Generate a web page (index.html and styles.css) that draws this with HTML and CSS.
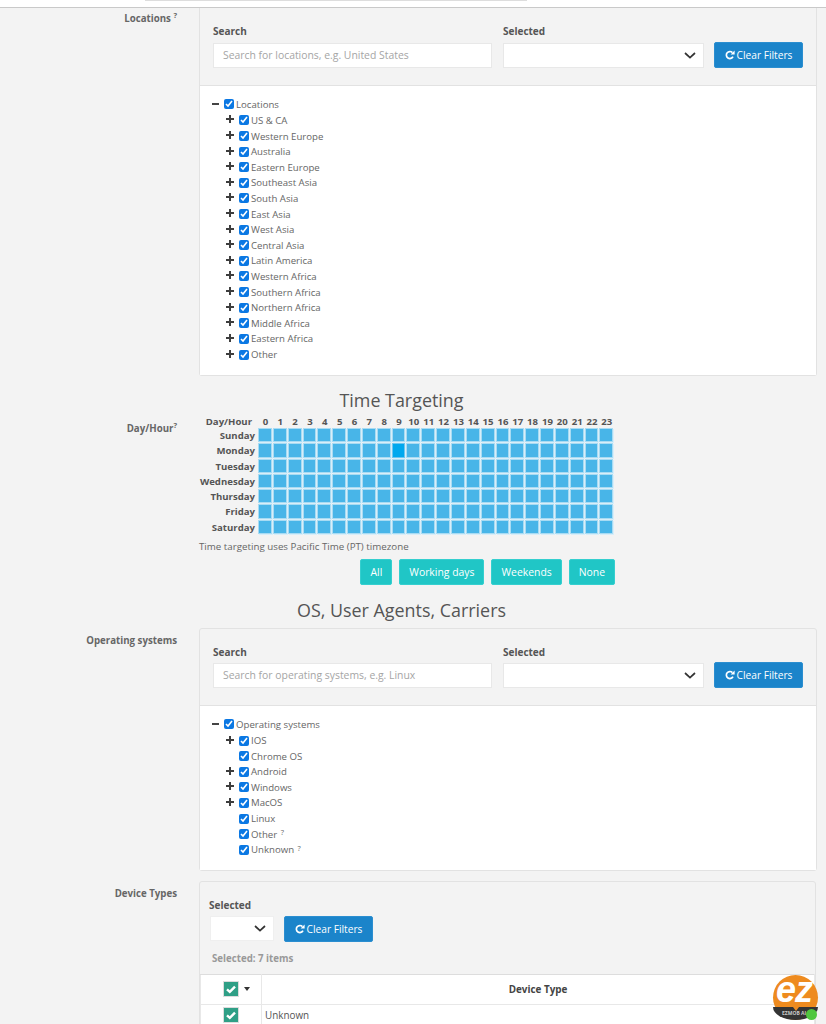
FILE: index.html
```html
<!DOCTYPE html>
<html lang="en">
<head>
    <meta charset="UTF-8">
    <title>Campaign Targeting</title>
    <meta name="viewport" content="width=device-width, initial-scale=1.0">
    <link rel="stylesheet" href="styles.css">
</head>
<body>
    <svg class="icon-defs" width="0" height="0">
        <symbol id="plus" viewBox="0 0 9 9"><path d="M3.4 0h2.2v3.4H9v2.2H5.6V9H3.4V5.6H0V3.4h3.4z"/></symbol>
        <symbol id="chevron" viewBox="0 0 12 7"><path d="M1 1l5 4.6L11 1" fill="none" stroke="#333" stroke-width="1.7"/></symbol>
        <symbol id="refresh" viewBox="0 0 10 10"><path d="M8 6.6A3.5 3.5 0 1 1 7.4 2.6" fill="none" stroke="#fff" stroke-width="1.7"/><path d="M9.6.6v4H5.6z" fill="#fff"/></symbol>
        <symbol id="tick" viewBox="0 0 14 14"><path d="M3 7.4l2.8 2.5L11 4.6" fill="none" stroke="#fff" stroke-width="2.4"/></symbol>
    </svg>

    <div class="top-strip"><div class="top-strip-search"></div></div>

    <div class="form-row row-locations">
        <div class="row-label">Locations <sup>?</sup></div>
        <div class="panel">
            <div class="filter-bar">
                <div class="field field-search">
                    <label>Search</label>
                    <input type="text" class="search-box" placeholder="Search for locations, e.g. United States">
                </div>
                <div class="field field-selected">
                    <label>Selected</label>
                    <div class="select-box"><svg class="chevron"><use href="#chevron"/></svg></div>
                </div>
                <button class="clear-button"><svg class="refresh"><use href="#refresh"/></svg>Clear Filters</button>
            </div>
            <div class="tree">
                <div class="tree-root"><span class="minus"></span><input type="checkbox" checked>Locations</div>
                <div class="tree-item"><svg class="plus"><use href="#plus"/></svg><input type="checkbox" checked>US &amp; CA</div>
                <div class="tree-item"><svg class="plus"><use href="#plus"/></svg><input type="checkbox" checked>Western Europe</div>
                <div class="tree-item"><svg class="plus"><use href="#plus"/></svg><input type="checkbox" checked>Australia</div>
                <div class="tree-item"><svg class="plus"><use href="#plus"/></svg><input type="checkbox" checked>Eastern Europe</div>
                <div class="tree-item"><svg class="plus"><use href="#plus"/></svg><input type="checkbox" checked>Southeast Asia</div>
                <div class="tree-item"><svg class="plus"><use href="#plus"/></svg><input type="checkbox" checked>South Asia</div>
                <div class="tree-item"><svg class="plus"><use href="#plus"/></svg><input type="checkbox" checked>East Asia</div>
                <div class="tree-item"><svg class="plus"><use href="#plus"/></svg><input type="checkbox" checked>West Asia</div>
                <div class="tree-item"><svg class="plus"><use href="#plus"/></svg><input type="checkbox" checked>Central Asia</div>
                <div class="tree-item"><svg class="plus"><use href="#plus"/></svg><input type="checkbox" checked>Latin America</div>
                <div class="tree-item"><svg class="plus"><use href="#plus"/></svg><input type="checkbox" checked>Western Africa</div>
                <div class="tree-item"><svg class="plus"><use href="#plus"/></svg><input type="checkbox" checked>Southern Africa</div>
                <div class="tree-item"><svg class="plus"><use href="#plus"/></svg><input type="checkbox" checked>Northern Africa</div>
                <div class="tree-item"><svg class="plus"><use href="#plus"/></svg><input type="checkbox" checked>Middle Africa</div>
                <div class="tree-item"><svg class="plus"><use href="#plus"/></svg><input type="checkbox" checked>Eastern Africa</div>
                <div class="tree-item"><svg class="plus"><use href="#plus"/></svg><input type="checkbox" checked>Other</div>
            </div>
        </div>
    </div>

    <h2 class="section-title title-time">Time Targeting</h2>

    <div class="form-row row-time">
        <div class="row-label label-time">Day/Hour<sup>?</sup></div>
        <div class="time-body">
            <div class="time-grid" id="timeGrid"></div>
            <p class="time-note">Time targeting uses Pacific Time (PT) timezone</p>
            <div class="time-buttons">
                <button class="time-button">All</button>
                <button class="time-button">Working days</button>
                <button class="time-button">Weekends</button>
                <button class="time-button">None</button>
            </div>
        </div>
    </div>

    <h2 class="section-title title-os">OS, User Agents, Carriers</h2>

    <div class="form-row">
        <div class="row-label">Operating systems</div>
        <div class="panel panel-boxed">
            <div class="filter-bar">
                <div class="field field-search">
                    <label>Search</label>
                    <input type="text" class="search-box" placeholder="Search for operating systems, e.g. Linux">
                </div>
                <div class="field field-selected">
                    <label>Selected</label>
                    <div class="select-box"><svg class="chevron"><use href="#chevron"/></svg></div>
                </div>
                <button class="clear-button"><svg class="refresh"><use href="#refresh"/></svg>Clear Filters</button>
            </div>
            <div class="tree">
                <div class="tree-root"><span class="minus"></span><input type="checkbox" checked>Operating systems</div>
                <div class="tree-item"><svg class="plus"><use href="#plus"/></svg><input type="checkbox" checked>IOS</div>
                <div class="tree-item"><span class="no-plus"></span><input type="checkbox" checked>Chrome OS</div>
                <div class="tree-item"><svg class="plus"><use href="#plus"/></svg><input type="checkbox" checked>Android</div>
                <div class="tree-item"><svg class="plus"><use href="#plus"/></svg><input type="checkbox" checked>Windows</div>
                <div class="tree-item"><svg class="plus"><use href="#plus"/></svg><input type="checkbox" checked>MacOS</div>
                <div class="tree-item"><span class="no-plus"></span><input type="checkbox" checked>Linux</div>
                <div class="tree-item"><span class="no-plus"></span><input type="checkbox" checked>Other&nbsp;<sup>?</sup></div>
                <div class="tree-item"><span class="no-plus"></span><input type="checkbox" checked>Unknown&nbsp;<sup>?</sup></div>
            </div>
        </div>
    </div>

    <div class="form-row row-device">
        <div class="row-label">Device Types</div>
        <div class="panel panel-boxed panel-device">
            <div class="device-filter">
                <label>Selected</label>
                <div class="device-controls">
                    <div class="select-box select-small"><svg class="chevron"><use href="#chevron"/></svg></div>
                    <button class="clear-button"><svg class="refresh"><use href="#refresh"/></svg>Clear Filters</button>
                </div>
                <p class="selected-count">Selected: 7 items</p>
            </div>
            <table class="device-table">
                <tr class="device-head">
                    <th class="col-check"><span class="green-check"><svg><use href="#tick"/></svg></span><span class="caret"></span></th>
                    <th>Device Type</th>
                </tr>
                <tr>
                    <td class="col-check"><span class="green-check"><svg><use href="#tick"/></svg></span></td>
                    <td>Unknown</td>
                </tr>
            </table>
        </div>
    </div>

    <div class="ez-badge">
        <span class="ez-base">EZMOB AI</span>
        <span class="ez-logo">ez</span>
        <span class="ez-dot"></span>
    </div>

    <script>
        // Cabeçalho e células da grade de horários
        const grid = document.getElementById('timeGrid');
        const days = ['Sunday', 'Monday', 'Tuesday', 'Wednesday', 'Thursday', 'Friday', 'Saturday'];
        let html = '<div class="grid-corner">Day/Hour</div>';
        for (let h = 0; h < 24; h++) {
            html += `<div class="grid-hour">${h}</div>`;
        }
        days.forEach(day => {
            html += `<div class="grid-day">${day}</div>`;
            for (let h = 0; h < 24; h++) {
                const active = day === 'Monday' && h === 9 ? ' cell-active' : '';
                html += `<div class="grid-cell${active}"></div>`;
            }
        });
        grid.innerHTML = html;
    </script>
</body>
</html>
```

FILE: styles.css
```css
html, body {
    height: 1024px;
    overflow: hidden;
}
body {
    margin: 0;
    font-family: "Open Sans", "Liberation Sans", sans-serif;
    font-size: 10px;
    background-color: #f3f3f3;
    color: #555;
}
.icon-defs {
    display: block;
}
sup {
    font-size: 7.5px;
    line-height: 0;
    vertical-align: 4px;
}
.top-strip {
    height: 7px;
    background-color: #fff;
    border-bottom: 1px solid #c9c9c9;
}
.top-strip-search {
    width: 382px;
    height: 1px;
    margin-left: 145px;
    background-color: #ddd;
}
.form-row {
    display: flex;
    padding-right: 10px;
}
.row-label {
    width: 177px;
    flex: none;
    margin-right: 22px;
    padding-top: 6px;
    text-align: right;
    font-weight: 700;
    font-size: 9.7px;
    color: #666;
}
.row-locations .row-label {
    padding-top: 4px;
}
.panel {
    flex: 1;
    border: 1px solid #e2e2e2;
    border-top: none;
    border-radius: 0 0 3px 3px;
}
.panel-boxed {
    border-top: 1px solid #e2e2e2;
    border-radius: 3px;
}

/* Barra de busca do painel */
.filter-bar {
    display: flex;
    align-items: flex-end;
    height: 78px;
    padding: 0 13px 17px;
    box-sizing: border-box;
    border-bottom: 1px solid #e2e2e2;
}
.panel-boxed .filter-bar {
    height: 77px;
}
label {
    display: block;
    font-weight: 700;
    font-size: 10px;
    line-height: 14px;
    margin-bottom: 5px;
    color: #555;
}
.panel-boxed .filter-bar label {
    margin-bottom: 4px;
}
.field-search {
    width: 279px;
    margin-right: 11px;
}
.field-selected {
    width: 201px;
    margin-right: 10px;
}
.search-box {
    display: block;
    width: 100%;
    height: 25px;
    box-sizing: border-box;
    padding: 0 9px 2px;
    border: 1px solid #e8e8e8;
    background-color: #fff;
    font-family: inherit;
    font-size: 10.4px;
}
.search-box::placeholder {
    color: #a5a5a5;
}
.select-box {
    display: flex;
    align-items: center;
    justify-content: flex-end;
    height: 25px;
    box-sizing: border-box;
    padding-right: 7px;
    border: 1px solid #e8e8e8;
    background-color: #fff;
}
.chevron {
    width: 12px;
    height: 7px;
}
.clear-button {
    display: flex;
    align-items: center;
    justify-content: center;
    width: 89px;
    height: 26px;
    padding: 0;
    border: 1px solid #2b8ed0;
    border-radius: 2px;
    background-color: #1b84ca;
    color: #fff;
    font-family: inherit;
    font-size: 10.2px;
}
.refresh {
    width: 10px;
    height: 10px;
    margin-right: 2px;
}

/* Árvore de seleção */
.tree {
    padding: 10px 12px 13px;
    background-color: #fff;
}
.panel-boxed .tree {
    padding-bottom: 12px;
}
.tree-root,
.tree-item {
    display: flex;
    align-items: center;
    height: 15.62px;
    font-size: 9.65px;
    color: #666;
}
.tree-root {
    height: 16.6px;
}
.tree-item {
    padding-left: 14px;
}
.tree input {
    width: 10px;
    height: 10px;
    margin: 0 2px 0 0;
    accent-color: #0b78e3;
    flex: none;
}
.minus {
    width: 7px;
    height: 2px;
    margin-right: 5px;
    background-color: #444;
}
.plus {
    width: 8px;
    height: 8px;
    margin-right: 5px;
    margin-top: -2px;
    fill: #3d3d3d;
}
.no-plus {
    width: 13px;
    flex: none;
}
.tree sup {
    align-self: flex-start;
    margin-top: 3px;
    margin-left: 1px;
    line-height: 1;
}

/* Títulos das seções */
.section-title {
    width: 803px;
    margin: 0;
    text-align: center;
    font-weight: 400;
    font-size: 17.9px;
    line-height: 25px;
    color: #555;
}
.title-time {
    margin-top: 12px;
}
.title-os {
    margin-top: 13px;
    margin-bottom: 5px;
}

/* Grade de horários */
.row-time {
    margin-top: 1px;
}
.row-time .label-time {
    padding-top: 8px;
}
.time-body {
    flex: 1;
}
.time-grid {
    display: grid;
    grid-template-columns: 59px repeat(24, 14.85px);
    grid-template-rows: 13.5px;
    grid-auto-rows: 15.33px;
    font-weight: 700;
    font-size: 9.6px;
    color: #555;
}
.grid-corner {
    text-align: right;
    padding-right: 6px;
    line-height: 15px;
    margin-left: -10px;
    white-space: nowrap;
}
.grid-hour {
    text-align: center;
    line-height: 15px;
}
.grid-day {
    text-align: right;
    padding-right: 3px;
    line-height: 15px;
    margin-left: -10px;
    white-space: nowrap;
}
.grid-cell {
    margin: 0 1px 1px 0;
    border: 1px solid #a8dbf3;
    box-shadow: 1px 1px 0 #d8eef9;
    background-color: #48b5e8;
}
.cell-active {
    border-color: #6cc6f0;
    background-color: #00a8ee;
}
.time-note {
    margin: 5px 0 0;
    font-size: 9.75px;
    line-height: 14px;
    color: #666;
}
.time-buttons {
    display: flex;
    justify-content: flex-end;
    gap: 7px;
    width: 416px;
    margin-top: 5px;
}
.time-button {
    height: 26px;
    padding: 0 9px;
    border: 1px solid #35cfcf;
    border-radius: 2px;
    background-color: #20c6c6;
    color: #fff;
    font-family: inherit;
    font-size: 10.4px;
}

/* Tipos de dispositivo */
.row-device {
    margin-top: 10px;
}
.panel-device {
    min-height: 160px;
}
.device-filter {
    height: 92px;
    box-sizing: border-box;
    padding: 16px 9px 0;
}
.device-filter label {
    margin-bottom: 4px;
}
.device-controls {
    display: flex;
    align-items: center;
    gap: 10px;
}
.select-small {
    width: 64px;
    margin-left: 1px;
    border-color: #efefef;
}
.selected-count {
    margin: 10px 0 0 3px;
    font-weight: 700;
    font-size: 9.7px;
    line-height: 14px;
    color: #999;
}
.device-table {
    width: 100%;
    border-collapse: collapse;
    background-color: #fff;
    font-size: 9.9px;
    color: #555;
}
.device-table th,
.device-table td {
    border: 1px solid #e8e8e8;
    padding: 0 3px;
}
.device-head th {
    height: 29px;
    border-top-color: #ddd;
    color: #444;
}
.device-table td {
    height: 20px;
}
.device-table .col-check {
    width: 38px;
    padding-left: 22px;
    padding-right: 0;
    text-align: left;
}
.green-check {
    display: inline-block;
    width: 14px;
    height: 14px;
    vertical-align: middle;
    background-color: #2f9f86;
    border: 1px solid #dcdcdc;
}
.green-check svg {
    display: block;
    width: 14px;
    height: 14px;
}
.caret {
    display: inline-block;
    margin-left: 5px;
    vertical-align: middle;
    border-top: 4px solid #333;
    border-left: 3px solid transparent;
    border-right: 3px solid transparent;
}

/* Selo flutuante */
.ez-badge {
    position: absolute;
    left: 773px;
    top: 975px;
    width: 45px;
    height: 45px;
    border-radius: 50%;
    background-color: #ee8b1f;
}
.ez-logo {
    position: absolute;
    left: 3px;
    top: 0;
    color: #fff;
    font-family: "Liberation Sans", sans-serif;
    font-weight: 700;
    font-style: italic;
    font-size: 36px;
    line-height: 36px;
    letter-spacing: -1px;
    margin-top: -3px;
}
.ez-base {
    position: absolute;
    left: 0;
    right: 0;
    bottom: 0;
    height: 13px;
    padding-left: 9px;
    border-radius: 0 0 22.5px 22.5px / 0 0 13px 13px;
    background-color: #343434;
    color: #ccc;
    font-size: 5px;
    font-weight: 700;
    line-height: 13px;
    white-space: nowrap;
}
.ez-base::before {
    content: "";
    position: absolute;
    left: 20px;
    top: 0;
    border-top: 4px solid #ee8b1f;
    border-left: 3px solid transparent;
    border-right: 3px solid transparent;
}
.ez-dot {
    position: absolute;
    right: 1px;
    bottom: 0;
    width: 11px;
    height: 11px;
    border-radius: 50%;
    background-color: #4fc73f;
}
```
